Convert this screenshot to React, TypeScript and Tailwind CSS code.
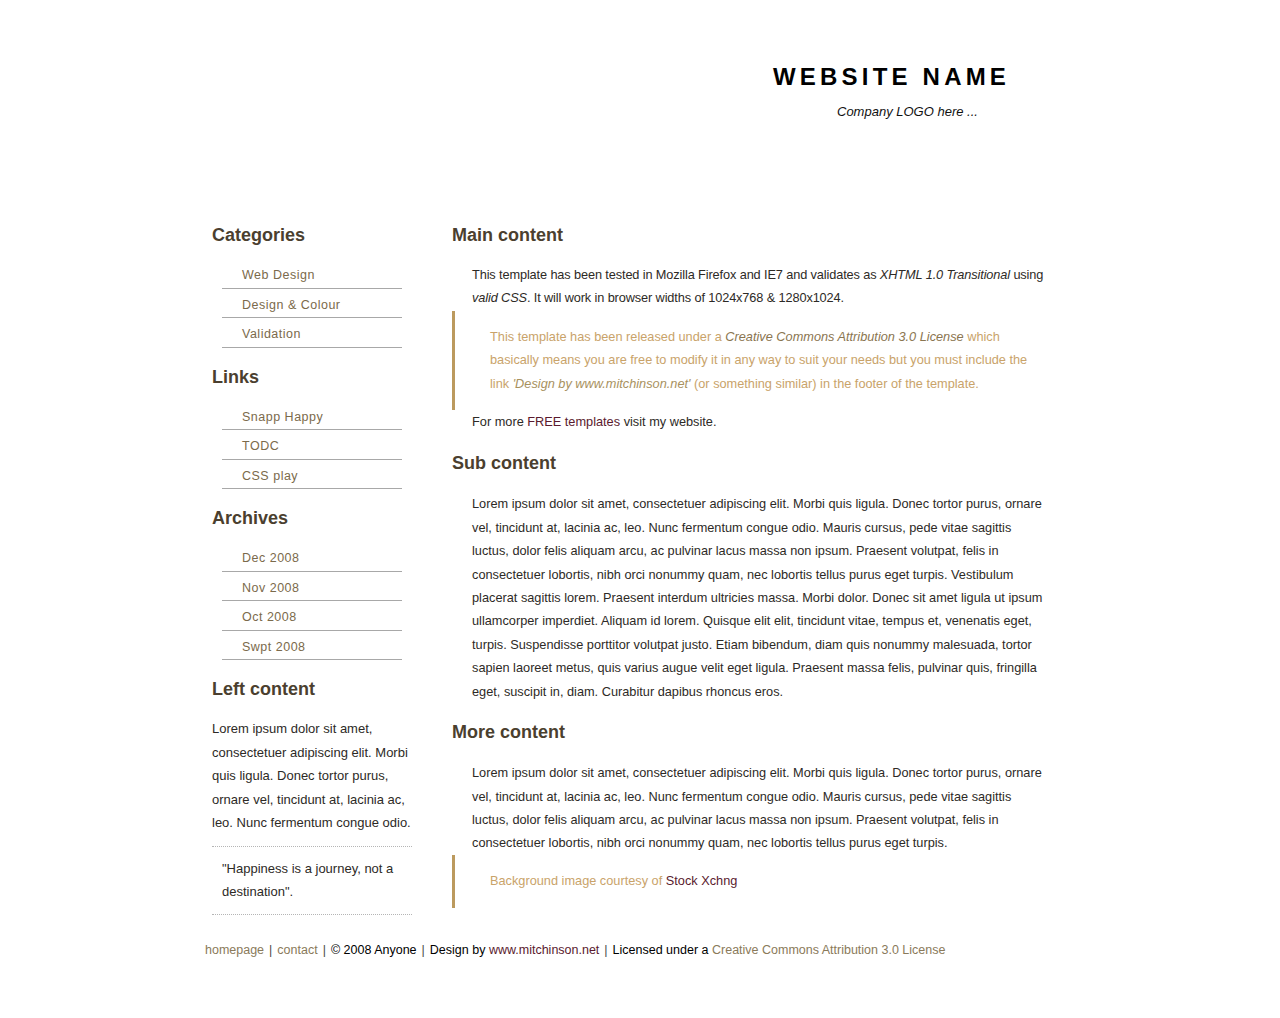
import React from 'react';

const font = { fontFamily: '"Liberation Sans", Arial, sans-serif' };

const sections = [
  { title: 'Categories', items: ['Web Design', 'Design & Colour', 'Validation'] },
  { title: 'Links', items: ['Snapp Happy', 'TODC', 'CSS play'] },
  { title: 'Archives', items: ['Dec 2008', 'Nov 2008', 'Oct 2008', 'Swpt 2008'] },
];

const lorem =
  'Lorem ipsum dolor sit amet, consectetuer adipiscing elit. Morbi quis ligula. Donec tortor purus, ornare vel, tincidunt at, lacinia ac, leo. Nunc fermentum congue odio. Mauris cursus, pede vitae sagittis luctus, dolor felis aliquam arcu, ac pulvinar lacus massa non ipsum. Praesent volutpat, felis in consectetuer lobortis, nibh orci nonummy quam, nec lobortis tellus purus eget turpis.';

function Heading({ children }: { children: React.ReactNode }) {
  return <h2 className="text-[18px] leading-[24px] font-bold text-[#4b3f2f]">{children}</h2>;
}

function Sep() {
  return <span className="text-[#4a4a4a] mx-[5px]">|</span>;
}

export default function App() {
  return (
    <div className="min-h-screen bg-white text-[13px] text-[#2d2a26]" style={font}>
      <div className="w-[870px] mx-auto">
        <header className="h-[223px] pt-[62px]">
          <h1 className="ml-[568px] text-[24px] leading-[30px] font-bold tracking-[4.2px] text-black">
            WEBSITE NAME
          </h1>
          <p className="ml-[632px] mt-[10px] text-[13px] italic text-[#111]">Company LOGO here ...</p>
        </header>

        <div className="flex pl-[7px]">
          <aside className="w-[200px] shrink-0">
            {sections.map((s, i) => (
              <div key={s.title} className={i === 0 ? '' : 'mt-[17px]'}>
                <Heading>{s.title}</Heading>
                <ul className="ml-[10px] w-[180px] mt-[12px]">
                  {s.items.map((it) => (
                    <li key={it} className="pl-[20px] pt-[8px] pb-[3px] leading-[17.5px] text-[12.5px] border-b border-[#a8a8a8] tracking-[0.5px] text-[#7b6a4b]">
                      {it}
                    </li>
                  ))}
                </ul>
              </div>
            ))}
            <div className="mt-[17px]">
              <Heading>Left content</Heading>
              <p className="mt-[16px] leading-[23.5px]">
                Lorem ipsum dolor sit amet, consectetuer adipiscing elit. Morbi quis ligula. Donec tortor purus, ornare vel, tincidunt at, lacinia ac, leo. Nunc fermentum congue odio.
              </p>
              <div className="mt-[11px] border-t border-b border-dotted border-[#b5b5b5] pl-[10px] pr-[10px] pt-[10px] pb-[10px] leading-[23.5px]">
                "Happiness is a journey, not a destination".
              </div>
            </div>
          </aside>

          <main className="ml-[40px] w-[596px] leading-[23.4px] text-[12.75px]">
            <Heading>Main content</Heading>
            <p className="mt-[16px] pl-[20px] tracking-[-0.12px]">
              This template has been tested in Mozilla Firefox and IE7 and validates as <em>XHTML 1.0 Transitional</em> using <em>valid CSS</em>. It will work in browser widths of 1024x768 &amp; 1280x1024.
            </p>
            <blockquote className="mt-[1px] border-l-[3px] border-[#bc9a5e] pl-[35px] pr-[3px] pt-[14px] pb-[15px] text-[#c9a36a]">
              This template has been released under a <em className="text-[#8a7550]">Creative Commons Attribution 3.0 License</em> which basically means you are free to modify it in any way to suit your needs but you must include the link <em className="text-[#a8915e]">'Design by www.mitchinson.net'</em> (or something similar) in the footer of the template.
            </blockquote>
            <p className="pl-[20px]">
              For more <span className="text-[#5a1a2e]">FREE templates</span> visit my website.
            </p>

            <div className="mt-[18px]">
              <Heading>Sub content</Heading>
            </div>
            <p className="mt-[17px] pl-[20px]">
              {lorem} Vestibulum placerat sagittis lorem. Praesent interdum ultricies massa. Morbi dolor. Donec sit amet ligula ut ipsum ullamcorper imperdiet. Aliquam id lorem. Quisque elit elit, tincidunt vitae, tempus et, venenatis eget, turpis. Suspendisse porttitor volutpat justo. Etiam bibendum, diam quis nonummy malesuada, tortor sapien laoreet metus, quis varius augue velit eget ligula. Praesent massa felis, pulvinar quis, fringilla eget, suscipit in, diam. Curabitur dapibus rhoncus eros.
            </p>

            <div className="mt-[17px]">
              <Heading>More content</Heading>
            </div>
            <p className="mt-[17px] pl-[20px]">{lorem}</p>
            <blockquote className="border-l-[3px] border-[#bc9a5e] pl-[35px] pt-[14px] pb-[16px] text-[#c9a36a]">
              Background image courtesy of <span className="text-[#5a1a2e]">Stock Xchng</span>
            </blockquote>
          </main>
        </div>

        <footer className="mt-[26px] pb-[60px] leading-[18px] text-[12.5px]">
          <span className="text-[#8a7a5a]">homepage</span>
          <Sep />
          <span className="text-[#8a7a5a]">contact</span>
          <Sep />
          <span className="text-black">© 2008 Anyone</span>
          <Sep />
          <span className="text-black">Design by </span>
          <span className="text-[#5a1a2e]">www.mitchinson.net</span>
          <Sep />
          <span className="text-black">Licensed under a </span>
          <span className="text-[#8a7a5a]">Creative Commons Attribution 3.0 License</span>
        </footer>
      </div>
    </div>
  );
}
